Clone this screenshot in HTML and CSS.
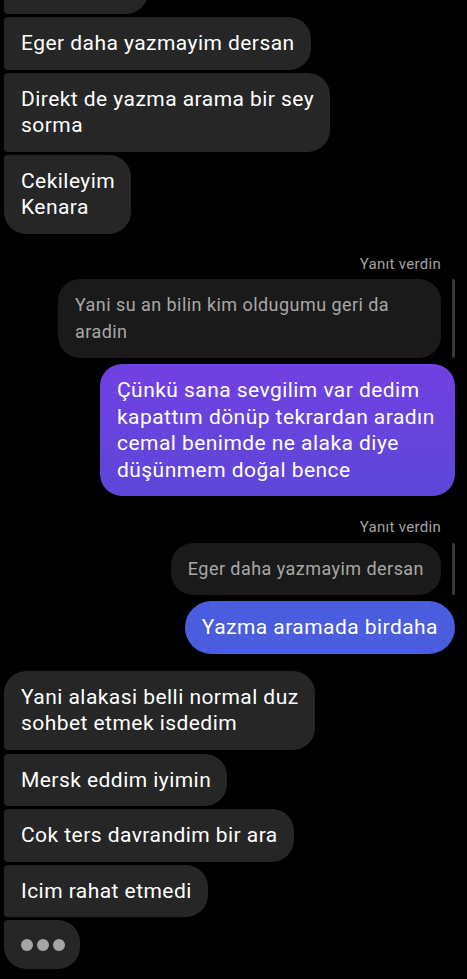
FILE: index.html
```html
<!DOCTYPE html>
<html lang="tr">
<head>
    <meta charset="UTF-8">
    <meta name="viewport" content="width=device-width, initial-scale=1.0">
    <title>Sohbet</title>
    <link rel="stylesheet" href="styles.css">
</head>
<body>
<div class="chat">
    <div class="group left">
        <div class="msg cut"></div>
        <div class="msg">Eger daha yazmayim dersan</div>
        <div class="msg">Direkt de yazma arama bir sey<br>sorma</div>
        <div class="msg last">Cekileyim<br>Kenara</div>
    </div>

    <div class="group right">
        <div class="label">Yanıt verdin</div>
        <div class="reply">
            <div class="quote wide">Yani su an bilin kim oldugumu geri da<br>aradin</div>
            <div class="bar"></div>
        </div>
        <div class="msg purple">Çünkü sana sevgilim var dedim<br>kapattım dönüp tekrardan aradın<br>cemal benimde ne alaka diye<br>düşünmem doğal bence</div>

        <div class="label second">Yanıt verdin</div>
        <div class="reply">
            <div class="quote">Eger daha yazmayim dersan</div>
            <div class="bar"></div>
        </div>
        <div class="msg blue">Yazma aramada birdaha</div>
    </div>

    <div class="group left bottom">
        <div class="msg first">Yani alakasi belli normal duz<br>sohbet etmek isdedim</div>
        <div class="msg">Mersk eddim iyimin</div>
        <div class="msg">Cok ters davrandim bir ara</div>
        <div class="msg">Icim rahat etmedi</div>
        <div class="msg last typing">
            <span class="dot"></span><span class="dot"></span><span class="dot"></span>
        </div>
    </div>
</div>
</body>
</html>
```

FILE: styles.css
```css
body{
    margin: 0;
    background: #000;
    font-family: Roboto, "Noto Sans", sans-serif;
    color: #fff;
    overflow: hidden;
}
.chat{
    padding: 0 12px 0 4px;
}
.group{
    display: flex;
    flex-direction: column;
    gap: 3px;
}
.left{
    align-items: flex-start;
}
.right{
    align-items: flex-end;
}
.msg{
    font-size: 21px;
    letter-spacing: 0.45px;
    line-height: 26.5px;
    padding: 13px 16px 13px 17px;
    white-space: nowrap;
    background: #262626;
    border-radius: 4px 22px 22px 4px;
}
.left .first{
    border-top-left-radius: 22px;
}
.left .last{
    border-bottom-left-radius: 22px;
}
.cut{
    width: 111px;
    height: 26.5px;
    margin-top: -38.5px;
}
.label{
    margin-top: 20px;
    margin-bottom: 2.5px;
    font-size: 15px;
    letter-spacing: 0.3px;
    line-height: 20px;
    color: #a3a3a3;
    padding-right: 14px;
}
.label.second{
    margin-top: 18px;
}
.reply{
    display: flex;
    align-items: stretch;
    gap: 11px;
    margin-bottom: 3px;
}
.quote{
    background: #1a1a1a;
    color: #a8a8a8;
    font-size: 18px;
    letter-spacing: 0.45px;
    line-height: 26.5px;
    padding: 13px 17px;
    white-space: nowrap;
    border-radius: 22px;
}
.quote.wide{
    width: 349px;
}
.bar{
    width: 3px;
    background: #3a3a3a;
    border-radius: 2px;
}
.purple{
    background: linear-gradient(180deg, #7140e1 0%, #5d47d9 100%);
    border-radius: 22px;
    padding-right: 16px;
    width: 322px;
}
.blue{
    background: #4a5ddf;
    border-radius: 27px;
    padding-left: 17px;
    padding-right: 17px;
}
.bottom{
    margin-top: 17px;
}
.bottom .first{
    margin-bottom: 1px;
}
.typing{
    display: flex;
    align-items: center;
    gap: 4px;
    height: 49px;
    box-sizing: border-box;
    padding: 0 15px 0 17px;
}
.dot{
    width: 12px;
    height: 12px;
    border-radius: 50%;
    background: #a5a5a5;
}
```
